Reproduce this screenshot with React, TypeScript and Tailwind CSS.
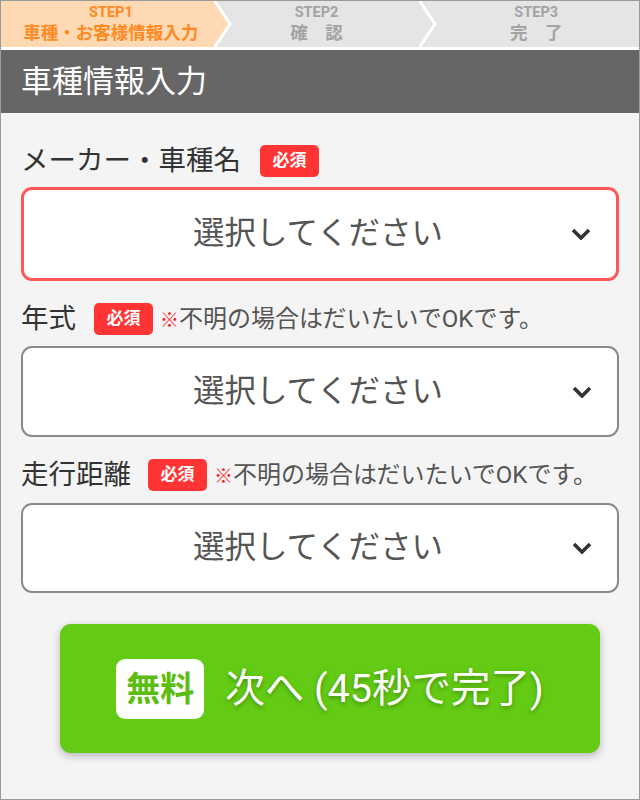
const FONT = { fontFamily: 'Roboto, "Noto Sans CJK JP", sans-serif' };

function StepArrow({ fill }: { fill: string }) {
  return (
    <svg className="absolute left-full top-0 z-10 h-full w-[20px]" viewBox="0 0 20 46" preserveAspectRatio="none">
      <polygon points="-2,0 16,23 -2,46" fill={fill} />
      <polyline points="0,-1 16,23 0,47" fill="none" stroke="#ffffff" strokeWidth="3" />
    </svg>
  );
}

function Chevron() {
  return (
    <svg width="20" height="12" viewBox="0 0 20 12" className="shrink-0">
      <polyline points="2,2 10,10 18,2" fill="none" stroke="#333333" strokeWidth="3.6" />
    </svg>
  );
}

function Required() {
  return (
    <span className="flex h-[32px] w-[59px] shrink-0 items-center justify-center rounded-[5px] bg-[#ff3535] text-[17px] font-bold leading-none text-white">
      必須
    </span>
  );
}

function Note() {
  return (
    <span className="ml-[7px] whitespace-nowrap text-[24px] leading-none text-[#555555]">
      <span className="text-[19px] text-[#ff1a1a]">※</span>不明の場合はだいたいでOKです。
    </span>
  );
}

function SelectBox({ active, h }: { active?: boolean; h: string }) {
  return (
    <div
      className={
        'relative flex items-center justify-center rounded-[11px] bg-white ' +
        h +
        (active ? ' border-[3px] border-[#ff5757]' : ' border-2 border-[#8a8a8a]')
      }
    >
      <span className="pr-[4px] text-[31.5px] leading-none text-[#555555]">選択してください</span>
      <div className="absolute right-[25px] top-1/2 -translate-y-1/2">
        <Chevron />
      </div>
    </div>
  );
}

export default function App() {
  return (
    <div style={FONT} className="flex h-[800px] w-[640px] flex-col overflow-hidden border border-[#9a9a9a] bg-[#f4f4f4]">
      {/* steps */}
      <div className="flex h-[46px] shrink-0">
        <div className="relative flex flex-1 flex-col items-center justify-center bg-[#ffd9b4] pl-[7px] text-[#ff8a22]">
          <div className="text-[14.5px] font-bold leading-none">STEP1</div>
          <div className="mt-[5px] text-[17.5px] font-bold leading-none">車種・お客様情報入力</div>
          <StepArrow fill="#ffd9b4" />
        </div>
        <div className="relative flex flex-1 flex-col items-center justify-center bg-[#e5e5e5] text-[#a3a3a3]">
          <div className="text-[14.5px] font-bold leading-none">STEP2</div>
          <div className="mt-[5px] text-[17.5px] font-bold leading-none">確　認</div>
          <StepArrow fill="#e5e5e5" />
        </div>
        <div className="relative flex flex-1 flex-col items-center justify-center bg-[#e5e5e5] pl-[14px] text-[#a3a3a3]">
          <div className="text-[14.5px] font-bold leading-none">STEP3</div>
          <div className="mt-[5px] text-[17.5px] font-bold leading-none">完　了</div>
        </div>
      </div>

      <div className="h-[3px] shrink-0 bg-white" />

      {/* header */}
      <div className="flex h-[63px] shrink-0 items-center bg-[#666666] pl-[20px]">
        <h1 className="text-[31px] font-normal leading-none text-white">車種情報入力</h1>
      </div>

      {/* form */}
      <div className="flex flex-col px-[20px] pt-[31px]">
        <div className="flex h-[33px] items-center">
          <span className="mr-[19px] text-[27.5px] leading-none text-[#333333]">メーカー・車種名</span>
          <Required />
        </div>
        <div className="mt-[10px]">
          <SelectBox active h="h-[94px]" />
        </div>

        <div className="mt-[21px] flex h-[33px] items-center">
          <span className="mr-[18px] text-[27.5px] leading-none text-[#333333]">年式</span>
          <Required />
          <Note />
        </div>
        <div className="mt-[11px]">
          <SelectBox h="h-[91px]" />
        </div>

        <div className="mt-[21px] flex h-[33px] items-center">
          <span className="mr-[17px] text-[27.5px] leading-none text-[#333333]">走行距離</span>
          <Required />
          <Note />
        </div>
        <div className="mt-[12px]">
          <SelectBox h="h-[90px]" />
        </div>

        <div className="mt-[31px] pl-[39px]">
          <button className="flex h-[129px] w-[540px] items-center justify-center rounded-[11px] bg-[#63cb13] shadow-[0_3px_8px_rgba(0,0,0,0.25)]">
            <span className="flex h-[60px] w-[88px] items-center justify-center rounded-[9px] bg-white text-[34px] font-bold leading-none text-[#5cbd10]">
              無料
            </span>
            <span className="ml-[21px] text-[39.5px] leading-none text-white [text-shadow:0_2px_4px_rgba(0,0,0,0.3)]">
              次へ (45秒で完了)
            </span>
          </button>
        </div>
      </div>
    </div>
  );
}
